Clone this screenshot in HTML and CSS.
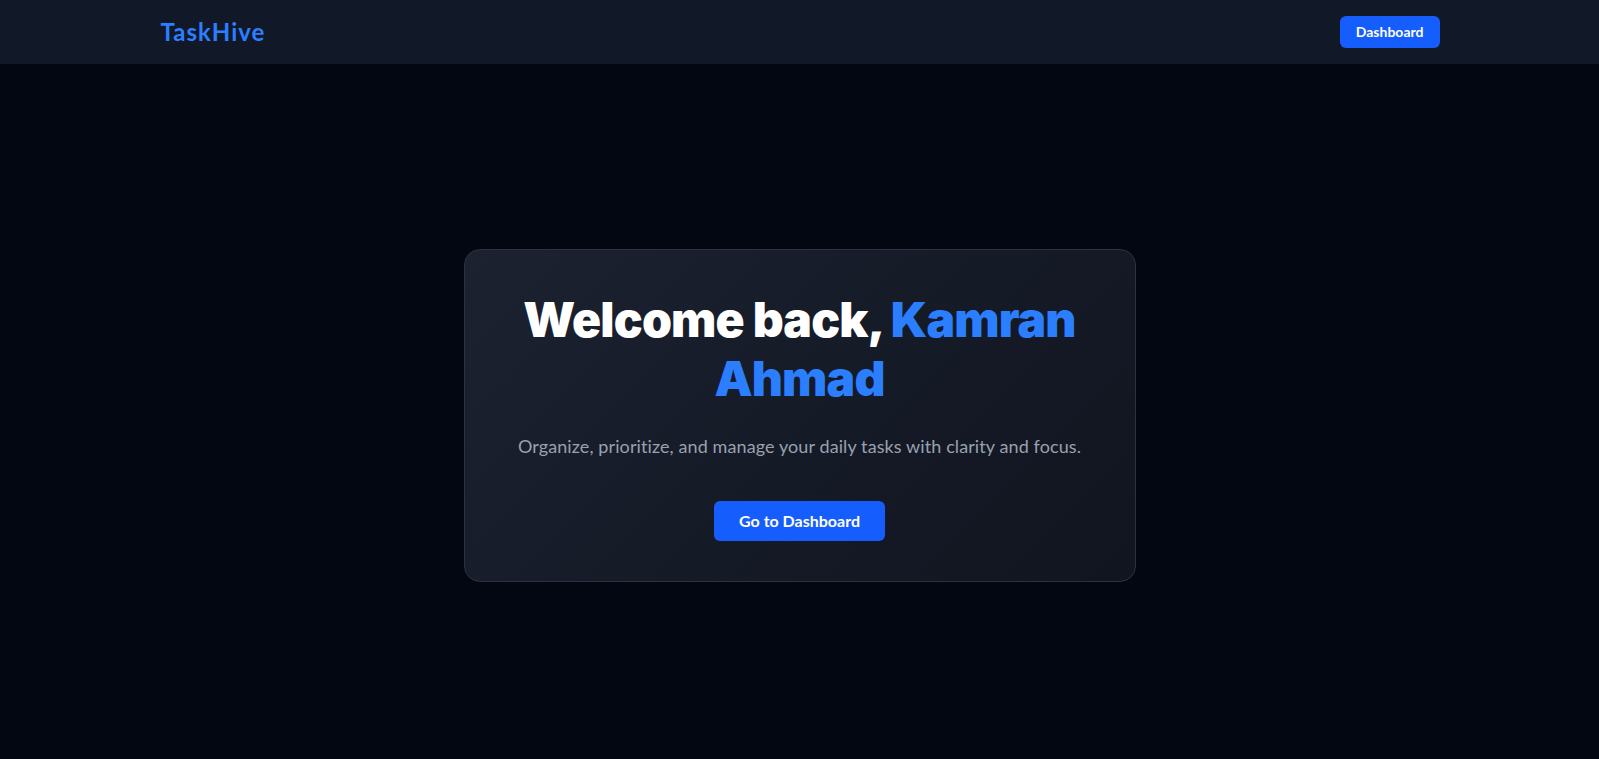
FILE: index.html
```html
<!DOCTYPE html>
<html lang="en">
<head>
<meta charset="utf-8">
<title>TaskHive</title>
<link rel="stylesheet" href="styles.css">
</head>
<body>
<header class="nav">
  <div class="nav-inner">
    <a class="logo" href="#">TaskHive</a>
    <a class="nav-btn" href="#">Dashboard</a>
  </div>
</header>
<main class="main">
  <section class="card">
    <h1 class="title">Welcome back, <span class="accent">Kamran Ahmad</span></h1>
    <p class="subtitle">Organize, prioritize, and manage your daily tasks with clarity and focus.</p>
    <a class="cta" href="#">Go to Dashboard</a>
  </section>
</main>
</body>
</html>
```
FILE: styles.css
```css
* { box-sizing: border-box; }
html, body { margin: 0; padding: 0; }
body {
  background: #030712;
  font-family: Lato, "Noto Sans", "Liberation Sans", sans-serif;
  color: #fff;
  min-height: 100vh;
}
a { text-decoration: none; }
.nav {
  height: 64px;
  background: #111827;
}
.nav-inner {
  max-width: 1280px;
  margin: 0 auto;
  height: 100%;
  display: flex;
  align-items: center;
  justify-content: space-between;
}
.logo {
  color: #2b7fff;
  font-size: 24px;
  font-weight: 700;
  line-height: 32px;
  letter-spacing: 1px;
  padding-left: 1px;
}
.nav-btn {
  background: #155dfc;
  color: #fff;
  font-size: 14px;
  font-weight: 700;
  line-height: 20px;
  padding: 6px 16px;
  border-radius: 6px;
}
.main {
  height: calc(100vh - 64px);
  display: flex;
  align-items: center;
  justify-content: center;
  padding-top: 7px;
}
.card {
  width: 672px;
  padding: 40px;
  border: 1px solid #2c323f;
  border-radius: 16px;
  background: linear-gradient(135deg, #1d2231 0%, #151a27 55%, #11151f 100%);
  text-align: center;
}
.title {
  margin: 0 0 24px;
  font-family: Inter, Lato, sans-serif;
  font-size: 48px;
  line-height: 59px;
  font-weight: 900;
  letter-spacing: -0.8px;
  color: #fff;
}
.accent { color: #2b7fff; }
.subtitle {
  margin: 0 0 41px;
  font-size: 18px;
  line-height: 28px;
  color: #99a1af;
  letter-spacing: 0.1px;
}
.cta {
  display: inline-block;
  background: #155dfc;
  color: #fff;
  font-size: 16px;
  font-weight: 700;
  line-height: 24px;
  padding: 8px 25px;
  border-radius: 6px;
}
```
